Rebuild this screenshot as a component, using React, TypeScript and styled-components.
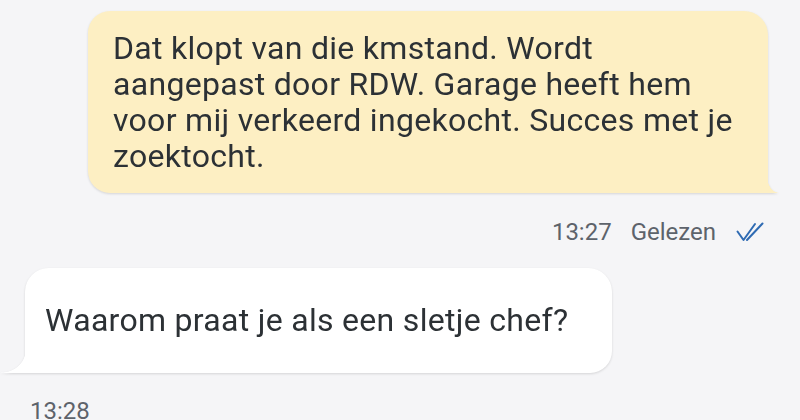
import styled, { createGlobalStyle } from "styled-components"

const GlobalStyle = createGlobalStyle`
	html, body {
		margin: 0;
		padding: 0;
		background: #f5f5f7;
	}
	body {
		font-family: Roboto, "Noto Sans", sans-serif;
		color: #2c3135;
	}
`

const yellow = "#fdefc3"
const white = "#ffffff"

type Side = { $side: "in" | "out" }

export default function App() {
	return (
		<Chat>
			<GlobalStyle />
			<Row $side="out">
				<Bubble $side="out">
					Dat klopt van die kmstand. Wordt
					<br />
					aangepast door RDW. Garage heeft hem
					<br />
					voor mij verkeerd ingekocht. Succes met je
					<br />
					zoektocht.
				</Bubble>
			</Row>
			<Meta $side="out">
				<span>13:27</span>
				<span>Gelezen</span>
				<ReadTicks />
			</Meta>
			<Row $side="in">
				<Bubble $side="in">Waarom praat je als een sletje chef?</Bubble>
			</Row>
			<Meta $side="in">
				<span>13:28</span>
			</Meta>
		</Chat>
	)
}

function ReadTicks() {
	return (
		<svg width="28" height="20" viewBox="0 0 28 20" fill="none">
			<path
				d="M1.5 9.5 L7.5 18 L19 2"
				stroke="#2f6bb3"
				strokeWidth="2"
				strokeLinecap="round"
				strokeLinejoin="round"
			/>
			<path
				d="M11 18 L26.5 1.5"
				stroke="#2f6bb3"
				strokeWidth="2"
				strokeLinecap="round"
			/>
		</svg>
	)
}

const Chat = styled.div`
	width: 800px;
	height: 420px;
	overflow: hidden;
	display: flex;
	flex-direction: column;
	padding-top: 11px;
	box-sizing: border-box;
`

const Row = styled.div<Side>`
	display: flex;
	padding-left: ${(p) => (p.$side === "out" ? "88px" : "25px")};
	margin-top: ${(p) => (p.$side === "out" ? "0" : "24px")};
`

const Bubble = styled.div<Side>`
	position: relative;
	box-sizing: border-box;
	width: ${(p) => (p.$side === "out" ? "680px" : "587px")};
	background: ${(p) => (p.$side === "out" ? yellow : white)};
	border-radius: ${(p) =>
		p.$side === "out" ? "22px 24px 0 22px" : "24px 24px 22px 0"};
	padding: ${(p) =>
		p.$side === "out" ? "19px 20px 19px 25px" : "34px 20px 35px 20px"};
	font-size: 32px;
	line-height: 36px;
	letter-spacing: 0.3px;
	white-space: nowrap;
	filter: drop-shadow(0 1px 1.2px rgba(0, 0, 0, 0.13));

	&::after {
		content: "";
		position: absolute;
		bottom: 0;
		${(p) =>
			p.$side === "out"
				? `right: -11px;
		width: 12px;
		height: 17px;
		background: radial-gradient(ellipse 12px 17px at 100% 0, transparent 97%, ${yellow} 100%);`
				: `left: -24px;
		width: 25px;
		height: 23px;
		background: radial-gradient(ellipse 25px 23px at 0 0, transparent 97%, ${white} 100%);`}
	}
`

const Meta = styled.div<Side>`
	display: flex;
	align-items: center;
	gap: 19px;
	font-size: 24px;
	line-height: 24px;
	color: #5d636b;
	height: 24px;
	justify-content: ${(p) => (p.$side === "out" ? "flex-end" : "flex-start")};
	padding: ${(p) => (p.$side === "out" ? "0 36px 0 0" : "0 0 0 30px")};
	margin-top: ${(p) => (p.$side === "out" ? "27px" : "26px")};

	svg {
		margin-left: 1px;
	}
`
